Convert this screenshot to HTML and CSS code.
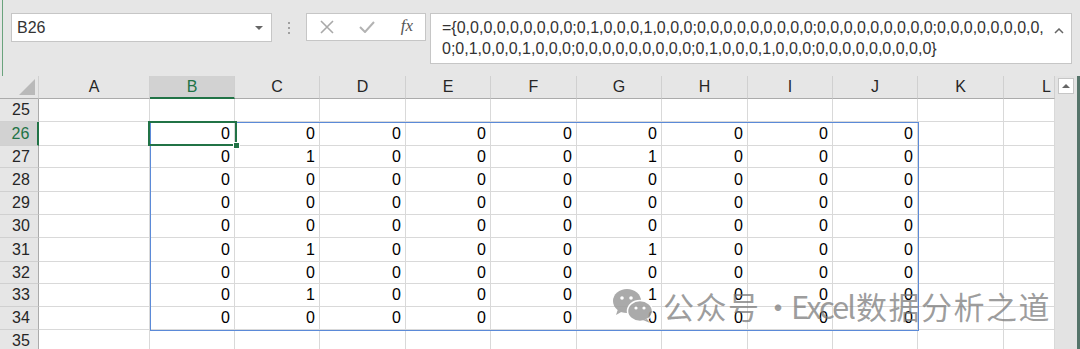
FILE: index.html
```
<!DOCTYPE html>
<html lang="zh-CN">
<head>
    <meta charset="UTF-8">
    <meta name="viewport" content="width=device-width, initial-scale=1.0">
    <title>Excel</title>
    <link rel="stylesheet" href="styles.css">
</head>
<body>
    <div class="app">
        <div class="toolbar">
            <div class="namebox">
                <span>B26</span>
                <i class="caret"></i>
            </div>
            <div class="grip"><i></i><i></i><i></i></div>
            <div class="fxbtns">
                <span class="btn">
                    <svg width="14" height="14" viewBox="0 0 14 14"><path d="M1 1L13 13M13 1L1 13" stroke="#a9a9a9" stroke-width="1.6" fill="none"/></svg>
                </span>
                <span class="btn">
                    <svg width="16" height="12" viewBox="0 0 16 12"><path d="M1 6L6 11L15 1" stroke="#b3b3b3" stroke-width="2" fill="none"/></svg>
                </span>
                <span class="btn fx">fx</span>
            </div>
            <div class="formula">
                <p>={0,0,0,0,0,0,0,0,0;0,1,0,0,0,1,0,0,0;0,0,0,0,0,0,0,0,0;0,0,0,0,0,0,0,0,0;0,0,0,0,0,0,0,0,<br>0;0,1,0,0,0,1,0,0,0;0,0,0,0,0,0,0,0,0;0,1,0,0,0,1,0,0,0;0,0,0,0,0,0,0,0,0}</p>
                <svg class="collapse" width="10" height="6" viewBox="0 0 10 6"><path d="M1 5L5 1L9 5" stroke="#666" stroke-width="1.5" fill="none"/></svg>
            </div>
        </div>

        <div class="sheet">
            <div class="grid">
                <div class="h corner"><i class="tri"></i></div><div class="h">A</div><div class="h sel">B</div><div class="h">C</div><div class="h">D</div><div class="h">E</div><div class="h">F</div><div class="h">G</div><div class="h">H</div><div class="h">I</div><div class="h">J</div><div class="h">K</div><div class="h clip">L</div>

                <div class="rh">25</div><div class="c"></div><div class="c"></div><div class="c"></div><div class="c"></div><div class="c"></div><div class="c"></div><div class="c"></div><div class="c"></div><div class="c"></div><div class="c"></div><div class="c"></div><div class="c"></div>
                <div class="rh sel">26</div><div class="c"></div><div class="c">0</div><div class="c">0</div><div class="c">0</div><div class="c">0</div><div class="c">0</div><div class="c">0</div><div class="c">0</div><div class="c">0</div><div class="c">0</div><div class="c"></div><div class="c"></div>
                <div class="rh">27</div><div class="c"></div><div class="c">0</div><div class="c">1</div><div class="c">0</div><div class="c">0</div><div class="c">0</div><div class="c">1</div><div class="c">0</div><div class="c">0</div><div class="c">0</div><div class="c"></div><div class="c"></div>
                <div class="rh">28</div><div class="c"></div><div class="c">0</div><div class="c">0</div><div class="c">0</div><div class="c">0</div><div class="c">0</div><div class="c">0</div><div class="c">0</div><div class="c">0</div><div class="c">0</div><div class="c"></div><div class="c"></div>
                <div class="rh">29</div><div class="c"></div><div class="c">0</div><div class="c">0</div><div class="c">0</div><div class="c">0</div><div class="c">0</div><div class="c">0</div><div class="c">0</div><div class="c">0</div><div class="c">0</div><div class="c"></div><div class="c"></div>
                <div class="rh">30</div><div class="c"></div><div class="c">0</div><div class="c">0</div><div class="c">0</div><div class="c">0</div><div class="c">0</div><div class="c">0</div><div class="c">0</div><div class="c">0</div><div class="c">0</div><div class="c"></div><div class="c"></div>
                <div class="rh">31</div><div class="c"></div><div class="c">0</div><div class="c">1</div><div class="c">0</div><div class="c">0</div><div class="c">0</div><div class="c">1</div><div class="c">0</div><div class="c">0</div><div class="c">0</div><div class="c"></div><div class="c"></div>
                <div class="rh">32</div><div class="c"></div><div class="c">0</div><div class="c">0</div><div class="c">0</div><div class="c">0</div><div class="c">0</div><div class="c">0</div><div class="c">0</div><div class="c">0</div><div class="c">0</div><div class="c"></div><div class="c"></div>
                <div class="rh">33</div><div class="c"></div><div class="c">0</div><div class="c">1</div><div class="c">0</div><div class="c">0</div><div class="c">0</div><div class="c">1</div><div class="c">0</div><div class="c">0</div><div class="c">0</div><div class="c"></div><div class="c"></div>
                <div class="rh">34</div><div class="c"></div><div class="c">0</div><div class="c">0</div><div class="c">0</div><div class="c">0</div><div class="c">0</div><div class="c">0</div><div class="c">0</div><div class="c">0</div><div class="c">0</div><div class="c"></div><div class="c"></div>
                <div class="rh">35</div><div class="c"></div><div class="c"></div><div class="c"></div><div class="c"></div><div class="c"></div><div class="c"></div><div class="c"></div><div class="c"></div><div class="c"></div><div class="c"></div><div class="c"></div><div class="c"></div>
            </div>

            <div class="vscroll">
                <span class="up"><i></i></span>
            </div>

            <!-- array range + active cell, drawn over the grid -->
            <div class="range"></div>
            <div class="active"><i class="handle"></i></div>

            <div class="mark">
                <svg width="42" height="36" viewBox="0 0 42 36">
                    <ellipse cx="15" cy="13" rx="14" ry="12" fill="#9c9c9c"/>
                    <path d="M6 21L4 27L11 23Z" fill="#9c9c9c"/>
                    <circle cx="10" cy="10" r="1.8" fill="#fff"/>
                    <circle cx="19" cy="10" r="1.8" fill="#fff"/>
                    <ellipse cx="28" cy="23" rx="12.5" ry="10.5" fill="#9c9c9c" stroke="#fff" stroke-width="1.5"/>
                    <path d="M35 31L38 35L31 32Z" fill="#9c9c9c"/>
                    <circle cx="24" cy="20" r="1.6" fill="#fff"/>
                    <circle cx="32" cy="20" r="1.6" fill="#fff"/>
                </svg>
                <p><span>公众号</span><span class="dot">·</span><span class="en">Excel</span><span>数据分析之道</span></p>
            </div>
        </div>
    </div>
</body>
</html>
```

FILE: styles.css
```
* {
    margin: 0;
    padding: 0;
    box-sizing: border-box;
}

body {
    width: 1080px;
    height: 349px;
    overflow: hidden;
    background: #e6e6e6;
    font-family: 'Liberation Sans', Arial, sans-serif;
}

.app {
    display: flex;
    flex-direction: column;
    height: 100%;
}

/* ---- formula bar ---- */

.toolbar {
    display: flex;
    align-items: flex-start;
    height: 76px;
    padding: 13px 0 0 11px;
    background: linear-gradient(to right, #e6e6e6 2px, #6aa37d 2px, #6aa37d 3px, #e6e6e6 3px);
}

.namebox {
    display: flex;
    align-items: center;
    justify-content: space-between;
    width: 261px;
    height: 29px;
    padding: 0 8px 0 5px;
    background: #fff;
    border: 1px solid #c6c6c6;
    font-size: 16px;
    color: #333;
}

.namebox .caret {
    width: 0;
    height: 0;
    border-left: 4px solid transparent;
    border-right: 4px solid transparent;
    border-top: 4px solid #666;
}

.grip {
    display: flex;
    flex-direction: column;
    align-items: center;
    justify-content: center;
    gap: 3px;
    width: 34px;
    height: 29px;
}

.grip i {
    width: 2px;
    height: 2px;
    background: #a0a0a0;
}

.fxbtns {
    display: grid;
    grid-template-columns: 40px 40px 40px;
    width: 120px;
    height: 28px;
    background: #fff;
    border: 1px solid #c6c6c6;
}

.fxbtns .btn {
    display: flex;
    align-items: center;
    justify-content: center;
}

.fxbtns .fx {
    font-family: 'Liberation Serif', serif;
    font-style: italic;
    font-size: 17px;
    color: #555;
    padding-bottom: 2px;
}

.formula {
    position: relative;
    width: 642px;
    height: 51px;
    margin-left: 4px;
    padding: 3px 0 0 11px;
    background: #fff;
    border: 1px solid #c6c6c6;
}

.formula p {
    font-size: 16px;
    line-height: 21px;
    color: #333;
    white-space: nowrap;
}

.formula .collapse {
    position: absolute;
    right: 7px;
    top: 14px;
}

/* ---- sheet ---- */

.sheet {
    position: relative;
    display: flex;
    flex: 1;
    overflow: hidden;
}

.grid {
    display: grid;
    grid-template-columns: 39px 111px 85px 85px 86px 85px 86px 85px 86px 85px 85px 86px 51px;
    grid-template-rows: 23px 23px 24px 22px 24px 23px 23px 24px 22px 23px 23px 23px;
    width: 1055px;
    font-size: 16px;
}

.h,
.rh {
    display: flex;
    align-items: center;
    justify-content: center;
    background: #e6e6e6;
    color: #262626;
}

.h {
    border-right: 1px solid #d0d0d0;
    border-bottom: 1px solid #ababab;
}

.h.clip {
    justify-content: flex-start;
    padding-left: 38px;
}

.rh {
    border-right: 1px solid #ababab;
    border-bottom: 1px solid #d0d0d0;
    padding-left: 4px;
}

.h.sel {
    background: #d2d2d2;
    color: #217346;
    border-bottom: 2px solid #217346;
}

.rh.sel {
    background: #d2d2d2;
    color: #217346;
    border-right: 2px solid #217346;
}

.corner {
    justify-content: flex-end;
    align-items: flex-end;
    padding: 0 3px 3px 0;
}

.corner .tri {
    width: 16px;
    height: 16px;
    background: #b9b9b9;
    clip-path: polygon(100% 0, 100% 100%, 0 100%);
}

.c {
    display: flex;
    align-items: center;
    justify-content: flex-end;
    padding-right: 4px;
    background: #fff;
    border-right: 1px solid #d9d9d9;
    border-bottom: 1px solid #d9d9d9;
    color: #000;
}

.vscroll {
    flex: 1;
    padding: 2px 0 0 3px;
    background: #e3e3e3;
    border-right: 3px solid #55746a;
}

.vscroll .up {
    display: flex;
    align-items: center;
    justify-content: center;
    width: 16px;
    height: 16px;
    background: #fff;
    border: 1px solid #c6c6c6;
}

.vscroll .up i {
    width: 0;
    height: 0;
    border-left: 4px solid transparent;
    border-right: 4px solid transparent;
    border-bottom: 4px solid #666;
}

.range {
    position: absolute;
    left: 150px;
    top: 46px;
    width: 769px;
    height: 209px;
    border: 1px solid #5b8ad8;
    pointer-events: none;
}

.active {
    position: absolute;
    left: 148px;
    top: 45px;
    width: 89px;
    height: 25px;
    border: 2px solid #217346;
}

.active .handle {
    position: absolute;
    right: -5px;
    bottom: -5px;
    width: 7px;
    height: 7px;
    background: #217346;
    border: 1px solid #fff;
}

.mark {
    position: absolute;
    left: 612px;
    top: 207px;
    display: flex;
    align-items: center;
    gap: 9px;
    color: rgba(120, 120, 120, 0.72);
    font-family: 'Noto Sans CJK SC', sans-serif;
    font-size: 31px;
    letter-spacing: 1.5px;
    white-space: nowrap;
}

.mark .dot {
    margin: 0 -4px 0 2px;
}

.mark .en {
    letter-spacing: -2px;
    margin-right: 2px;
}

.mark svg {
    opacity: 0.85;
}
```
